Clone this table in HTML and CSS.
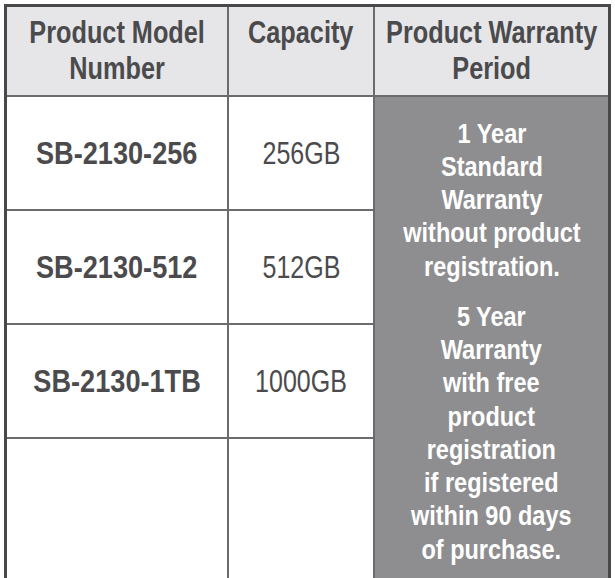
FILE: index.html
```html
<!DOCTYPE html>
<html lang="en">
<head>
<meta charset="utf-8">
<title>Product Warranty</title>
<link rel="stylesheet" href="styles.css">
</head>
<body>
<div class="table">
  <div class="cell head"><span class="t">Product Model<br>Number</span></div>
  <div class="cell head"><span class="t">Capacity</span></div>
  <div class="cell head"><span class="t">Product Warranty<br>Period</span></div>

  <div class="cell model"><span class="t">SB-2130-256</span></div>
  <div class="cell cap"><span class="t">256GB</span></div>
  <div class="cell warranty">
    <p><span class="t">1 Year<br>Standard<br>Warranty<br>without product<br>registration.</span></p>
    <p><span class="t">5 Year<br>Warranty<br>with free<br>product<br>registration<br>if registered<br>within 90 days<br>of purchase.</span></p>
  </div>

  <div class="cell model"><span class="t">SB-2130-512</span></div>
  <div class="cell cap"><span class="t">512GB</span></div>

  <div class="cell model"><span class="t">SB-2130-1TB</span></div>
  <div class="cell cap"><span class="t">1000GB</span></div>

  <div class="cell model"></div>
  <div class="cell cap"></div>
</div>
</body>
</html>
```
FILE: styles.css
```css
html, body {
  margin: 0;
  padding: 0;
  overflow: hidden;
  background: #ffffff;
}
body {
  padding: 4px 0 0 4px;
  font-family: "Liberation Sans", Arial, sans-serif;
}
.table {
  width: 601px;
  display: grid;
  grid-template-columns: 220px 144px 233px;
  grid-template-rows: 88px 112px 112px 112px 150px;
  gap: 2px;
  background: #6b6b6d;
  border: 3px solid #48484a;
}
.cell {
  background: #ffffff;
  color: #4b4b4d;
  text-align: center;
  overflow: visible;
}
.t {
  display: inline-block;
  white-space: nowrap;
  transform-origin: center center;
}
.head {
  display: flex;
  justify-content: center;
  align-items: flex-start;
  background: #e6e6e8;
  font-weight: bold;
  font-size: 32px;
  line-height: 36px;
  padding-top: 7px;
}
.head .t {
  flex: none;
  transform: scaleX(0.79);
}
.model, .cap {
  display: flex;
  align-items: center;
  justify-content: center;
  font-size: 30.5px;
}
.model {
  font-weight: bold;
}
.model .t {
  transform: scaleX(0.89);
}
.cap .t {
  transform: scaleX(0.82);
}
.warranty {
  grid-column: 3;
  grid-row: 2 / span 4;
  background: #8e8e90;
  color: #ffffff;
  font-weight: bold;
  font-size: 27px;
  line-height: 33.3px;
  padding-top: 20.5px;
}
.warranty p {
  margin: 0 0 16.7px 0;
}
.warranty .t {
  transform: scaleX(0.87);
}
```
